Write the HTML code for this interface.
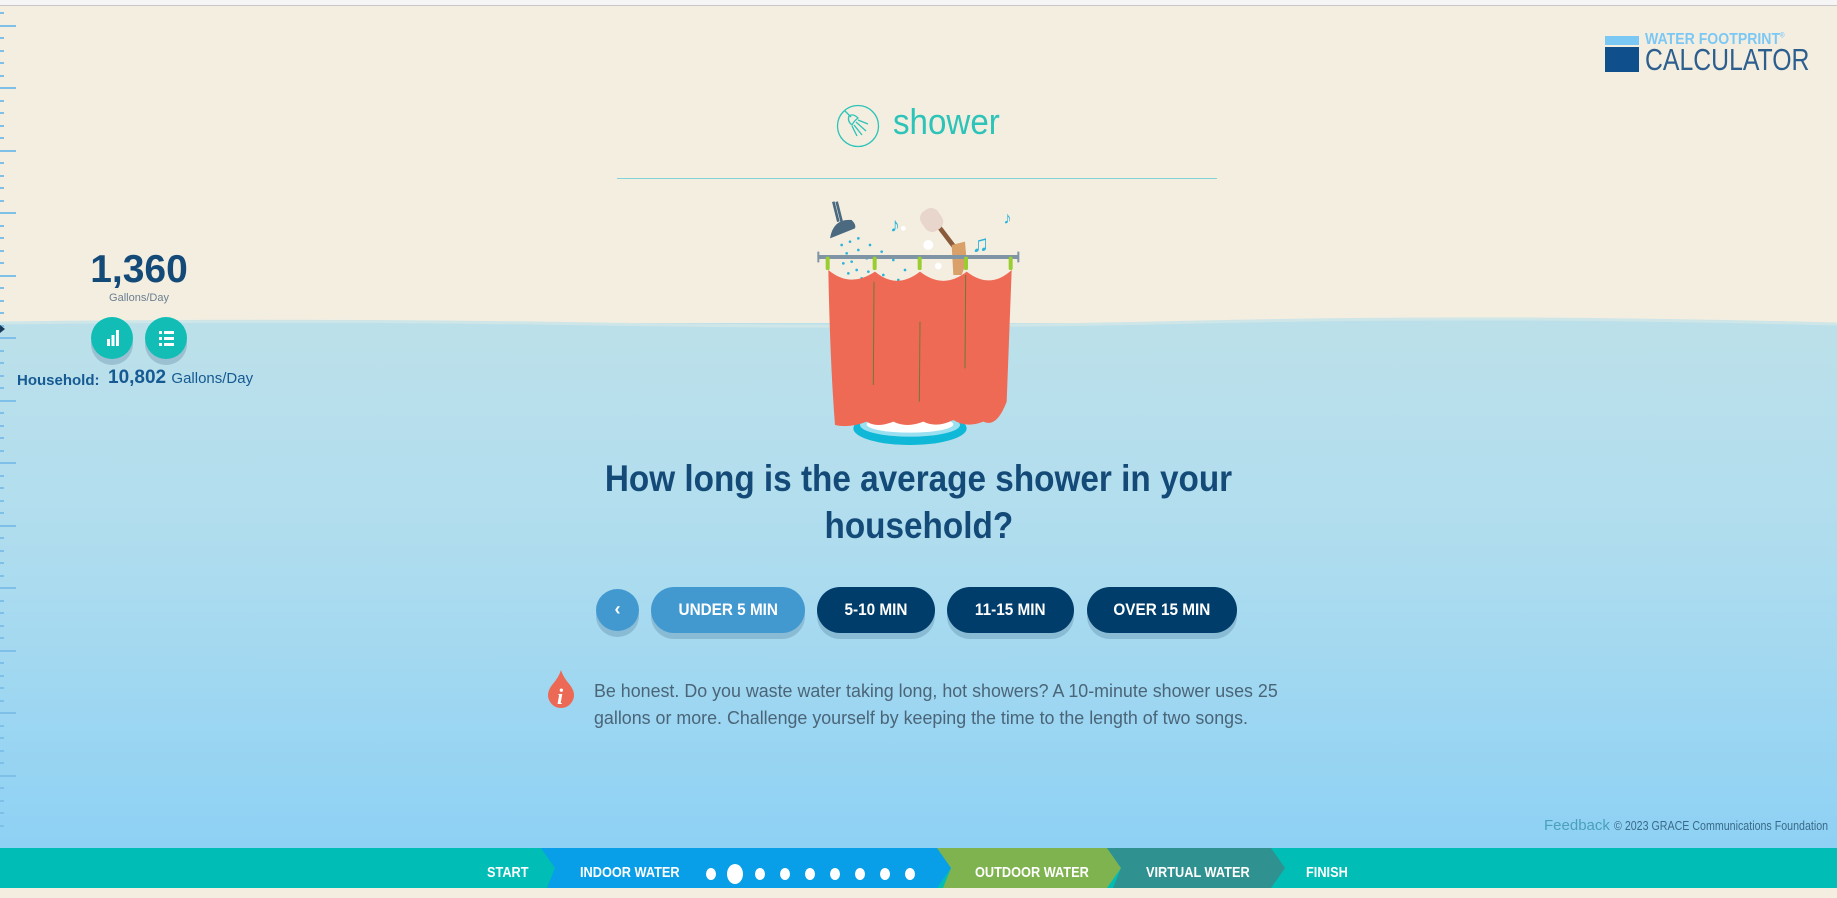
<!DOCTYPE html>
<html><head><meta charset="utf-8">
<style>
*{margin:0;padding:0;box-sizing:border-box}
body{width:1837px;height:888px;overflow:hidden;position:relative;font-family:"Liberation Sans",sans-serif;background:#f4eee1}
.abs{position:absolute}
.water{position:absolute;left:0;top:323px;width:1837px;height:525px;background:linear-gradient(#bce0ea,#b0ddee 40%,#8ed1f4)}
.topbar{position:absolute;left:0;top:0;width:1837px;height:6px;background:#f5f5f5;border-bottom:1px solid #c8c8c8}
.tick{position:absolute;left:0;height:2px;background:#7fc0e8;width:4px}
.tick.l{width:16px}
.q{position:absolute;left:0;width:1837px;text-align:center;color:#144a78;font-weight:bold;font-size:37px}
.q span{display:inline-block;transform:scaleX(.9)}
.btn{position:absolute;top:587px;height:46px;border-radius:23px;color:#fff;font-weight:bold;font-size:17px;text-align:center;line-height:46px;box-shadow:0 6px 0 rgba(60,100,130,.25)}
.btn span{display:inline-block;transform:scaleX(.9)}
.dark{background:#003d6b}
.lite{background:#4299d0}
.circ{position:absolute;width:42px;height:42px;border-radius:50%;background:#12bdb5;box-shadow:0 6px 0 rgba(60,100,130,.25)}
.foot{position:absolute;left:0;top:848px;width:1837px;height:40px;background:#00bdb5}
.ft{position:absolute;top:0;height:40px;line-height:50px;color:#fff;font-weight:bold;font-size:15px}
.ft span{display:inline-block;transform:scaleX(.85);transform-origin:left}
</style></head><body>
<div class="topbar"></div>
<div class="water"></div>
<svg class="abs" style="left:0;top:310px" width="1837" height="30"><path d="M0 13 Q300 9 600 14 T1200 12 T1837 14 L1837 30 L0 30Z" fill="#bce0ea"/><path d="M0 13 Q300 9 600 14 T1200 12 T1837 14" stroke="#cfe6e8" stroke-width="3" fill="none"/></svg>

<div id="ruler"></div>
<script>
var r='';for(var i=0;i<66;i++){var y=12+i*12.5;r+='<div class="tick'+((i%5==1)?' l':'')+'" style="top:'+y+'px"></div>';}
document.getElementById('ruler').innerHTML=r;
</script>
<div class="abs" style="left:0;top:325px;width:0;height:0;border-left:5px solid #1a3a5a;border-top:4px solid transparent;border-bottom:4px solid transparent"></div>

<!-- logo -->
<div class="abs" style="left:1605px;top:36px;width:34px;height:9px;background:#7cc8f4"></div>
<div class="abs" style="left:1605px;top:47px;width:34px;height:25px;background:#0f4f8c"></div>
<div class="abs" style="left:1645px;top:31px;color:#7cc8f4;font-weight:900;font-size:16px;white-space:nowrap"><span style="display:inline-block;transform:scaleX(.88);transform-origin:left">WATER FOOTPRINT<sup style="font-size:7px">®</sup></span></div>
<div class="abs" style="left:1645px;top:44px;color:#2c5f8e;font-size:31px;white-space:nowrap;line-height:32px"><span style="display:inline-block;transform:scaleX(.8);transform-origin:left">CALCULATOR</span></div>

<!-- shower header -->
<svg class="abs" style="left:836px;top:104px" width="44" height="44" viewBox="0 0 44 44" fill="none" stroke="#2cc3b8" stroke-width="1.3"><circle cx="22" cy="22" r="20.5"/><path d="M9 7 L15 13"/><path d="M13 12 Q17 9 22 14 Q18 17 16 21 Q11 17 13 12Z"/><path d="M22 16 L32 20 M20 18 L30 27 M18 21 L26 31 M16 22 L21 32"/></svg>
<div class="abs" style="left:893px;top:101px;color:#2cc3b8;font-size:36px"><span style="display:inline-block;transform:scaleX(.92);transform-origin:left">shower</span></div>
<div class="abs" style="left:617px;top:178px;width:600px;height:1px;background:#7fd6d6"></div>

<!-- illustration -->
<svg class="abs" style="left:810px;top:195px" width="220" height="260" viewBox="0 0 660 780">
<ellipse cx="300" cy="700" rx="170" ry="50" fill="#10b8d8"/>
<ellipse cx="300" cy="690" rx="150" ry="35" fill="#9be0f0"/>
<ellipse cx="300" cy="688" rx="130" ry="25" fill="#fff"/>
<path d="M70 20 L85 80 M80 20 L95 80" stroke="#4b6a80" stroke-width="8"/>
<path d="M60 130 Q70 70 125 75 Q140 90 135 100Z" fill="#4b6a80"/>
<g fill="#2cb3d8"><circle cx="95" cy="150" r="4"/><circle cx="110" cy="175" r="4"/><circle cx="125" cy="200" r="4"/><circle cx="140" cy="225" r="4"/><circle cx="155" cy="250" r="4"/><circle cx="120" cy="140" r="4"/><circle cx="145" cy="165" r="4"/><circle cx="170" cy="190" r="4"/><circle cx="195" cy="215" r="4"/><circle cx="220" cy="240" r="4"/><circle cx="145" cy="130" r="4"/><circle cx="180" cy="150" r="4"/><circle cx="215" cy="170" r="4"/><circle cx="250" cy="195" r="4"/><circle cx="285" cy="225" r="4"/><circle cx="100" cy="205" r="4"/><circle cx="115" cy="235" r="4"/><circle cx="175" cy="230" r="4"/><circle cx="265" cy="255" r="4"/></g>
<text x="240" y="110" fill="#2cb3d8" font-size="60">♪</text>
<text x="580" y="85" fill="#2cb3d8" font-size="50">♪</text>
<text x="485" y="170" fill="#2cb3d8" font-size="70">♫</text>
<circle cx="355" cy="150" r="15" fill="#fff"/><circle cx="385" cy="213" r="10" fill="#fff"/><circle cx="280" cy="100" r="7" fill="#fff"/>
<path d="M360 60 L455 185" stroke="#8a5a3a" stroke-width="14"/>
<rect x="335" y="40" width="60" height="70" rx="25" fill="#e8d5cc" transform="rotate(-35 365 75)"/>
<path d="M425 150 L465 140 L470 200 L455 240 L430 240Z" fill="#d9a06a"/>
<rect x="25" y="180" width="600" height="12" fill="#7f94a4"/>
<path d="M25 170v32M625 170v32" stroke="#7f94a4" stroke-width="6"/>
<path d="M55 225 Q120 280 195 230 Q260 285 330 230 Q400 285 470 230 Q540 285 605 225 L590 620 Q560 700 520 680 Q470 700 430 675 Q380 700 340 680 Q290 700 250 680 Q200 700 170 680 Q120 700 75 690 Q60 500 55 225Z" fill="#ee6a55"/>
<path d="M192 260 L190 570 M330 380 L328 620 M467 240 L465 520" stroke="#6b7a3a" stroke-width="3"/>
<g fill="#9acd32"><rect x="47" y="185" width="12" height="40" rx="5"/><rect x="188" y="185" width="12" height="40" rx="5"/><rect x="323" y="185" width="12" height="40" rx="5"/><rect x="462" y="185" width="12" height="40" rx="5"/><rect x="596" y="185" width="12" height="40" rx="5"/></g>
</svg>

<!-- left stats -->
<div class="abs" style="left:0;top:248px;width:278px;text-align:center;color:#144a78;font-weight:900;font-size:39px;line-height:44px">1,360</div>
<div class="abs" style="left:0;top:292px;width:278px;text-align:center;color:#6a7f90;font-size:11px">Gallons/Day</div>
<div class="circ" style="left:91px;top:317px"></div>
<div class="circ" style="left:145px;top:317px"></div>
<svg class="abs" style="left:91px;top:317px" width="42" height="42"><rect x="16" y="22" width="3" height="7" fill="#fff"/><rect x="20.5" y="18" width="3" height="11" fill="#fff"/><rect x="25" y="13" width="3" height="16" fill="#fff"/></svg>
<svg class="abs" style="left:145px;top:317px" width="42" height="42" fill="#fff"><rect x="14" y="14" width="3" height="3"/><rect x="19" y="14" width="10" height="3"/><rect x="14" y="20" width="3" height="3"/><rect x="19" y="20" width="10" height="3"/><rect x="14" y="26" width="3" height="3"/><rect x="19" y="26" width="10" height="3"/></svg>
<div class="abs" style="left:17px;top:372px;color:#155a92;font-size:15px;white-space:nowrap"><b>Household:</b></div>
<div class="abs" style="left:108px;top:367px;color:#155a92;font-size:19px;white-space:nowrap"><b>10,802</b> <span style="font-size:15px">Gallons/Day</span></div>

<!-- question -->
<div class="q" style="top:458px"><span>How long is the average shower in your</span></div>
<div class="q" style="top:505px"><span>household?</span></div>

<!-- buttons -->
<div class="btn lite" style="left:596px;width:43px;border-radius:50%;height:42px;top:589px;line-height:40px;font-size:18px">‹</div>
<div class="btn lite" style="left:651px;width:154px"><span>UNDER 5 MIN</span></div>
<div class="btn dark" style="left:817px;width:118px"><span>5-10 MIN</span></div>
<div class="btn dark" style="left:947px;width:127px"><span>11-15 MIN</span></div>
<div class="btn dark" style="left:1087px;width:150px"><span>OVER 15 MIN</span></div>

<!-- info -->
<svg class="abs" style="left:546px;top:669px" width="30" height="40" viewBox="0 0 30 40"><path d="M15 1 Q17 8 24 16 Q30 24 27 31 Q23 39 15 39 Q7 39 3 31 Q0 24 6 16 Q13 8 15 1Z" fill="#ec6a55"/><text x="11" y="35" fill="#fff" font-family="Liberation Serif" font-style="italic" font-weight="bold" font-size="22">i</text></svg>
<div class="abs" style="left:594px;top:677px;color:#4b6578;font-size:18.5px;line-height:27px;white-space:nowrap;transform:scaleX(.965);transform-origin:left">Be honest. Do you waste water taking long, hot showers? A 10-minute shower uses 25<br>gallons or more. Challenge yourself by keeping the time to the length of two songs.</div>

<div class="abs" style="left:1544px;top:817px;font-size:13px;color:#3a6a8a;white-space:nowrap"><span style="color:#4aa0b8;font-size:15px">Feedback</span> <span style="display:inline-block;transform:scaleX(.82);transform-origin:left">© 2023 GRACE Communications Foundation</span></div>

<!-- footer -->
<div class="foot">
<svg class="abs" style="left:0;top:0" width="1837" height="40">
<path d="M541 0 L937 0 L951 20 L937 40 L547 40 L555 20Z" fill="#089ee8"/>
<path d="M937 0 L1107 0 L1121 20 L1107 40 L943 40 L951 20Z" fill="#7fb350"/>
<path d="M1107 0 L1271 0 L1285 20 L1271 40 L1113 40 L1121 20Z" fill="#2f9190"/>
<g fill="#fff"><ellipse cx="711" cy="26" rx="5" ry="6"/><ellipse cx="735" cy="26" rx="8" ry="10"/><ellipse cx="760" cy="26" rx="5" ry="6"/><ellipse cx="785" cy="26" rx="5" ry="6"/><ellipse cx="810" cy="26" rx="5" ry="6"/><ellipse cx="835" cy="26" rx="5" ry="6"/><ellipse cx="860" cy="26" rx="5" ry="6"/><ellipse cx="885" cy="26" rx="5" ry="6"/><ellipse cx="910" cy="26" rx="5" ry="6"/></g>
</svg>
<div class="ft" style="left:487px"><span>START</span></div>
<div class="ft" style="left:580px"><span>INDOOR WATER</span></div>
<div class="ft" style="left:975px"><span>OUTDOOR WATER</span></div>
<div class="ft" style="left:1146px"><span>VIRTUAL WATER</span></div>
<div class="ft" style="left:1306px"><span>FINISH</span></div>
</div>
</body></html>
